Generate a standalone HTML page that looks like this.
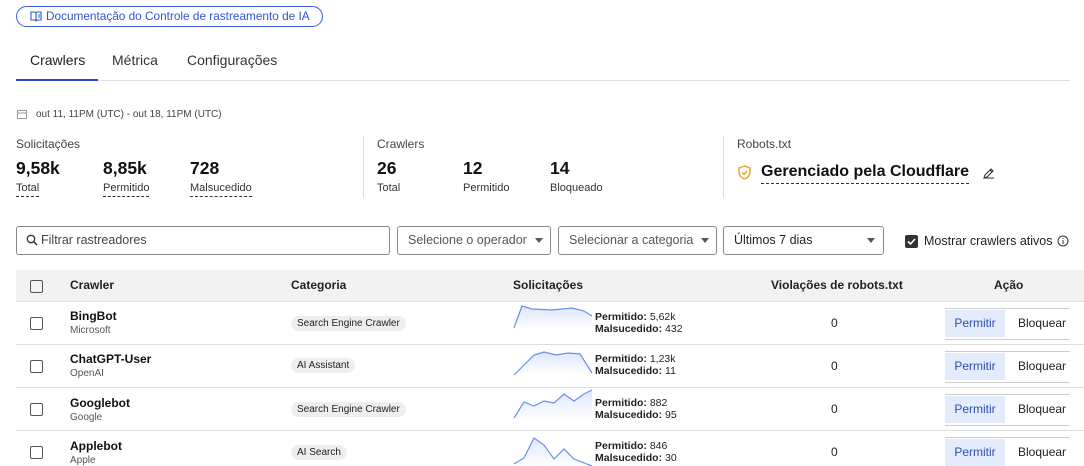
<!DOCTYPE html>
<html><head><meta charset="utf-8"><style>
*{box-sizing:border-box;margin:0;padding:0}
body{width:1084px;height:466px;overflow:hidden;background:#fff;font-family:"Liberation Sans",sans-serif;color:#222;position:relative}
.a{position:absolute;white-space:nowrap}
.doc{left:16px;top:6px;width:307px;height:21px;border:1px solid #3b5fe0;border-radius:11px;color:#2f55d4;font-size:11.8px;line-height:19px;padding-left:29px}
.tab{font-size:14px;top:52px;color:#333}
.lbl{font-size:11px;color:#333;border-bottom:1px dashed #333;padding-bottom:2px}
.big{font-size:17.5px;font-weight:bold;color:#111}
.sec{font-size:12px;color:#444}
.inp{height:29px;border:1px solid #888;border-radius:3px;top:226px;font-size:12.5px;color:#555;line-height:27px;padding-left:10px}
.cb{width:13px;height:13px;border:1px solid #555;border-radius:2px;left:30px}
.row{left:16px;width:1068px;height:43px;border-bottom:1px solid #ddd}
.name{font-size:12px;font-weight:bold;color:#111;left:70px}
.sub{font-size:10px;color:#555;left:70px}
.tag{font-size:10px;background:#eee;border-radius:8px;padding:2px 6px;left:291px}
.st{font-size:10.5px;left:595px;line-height:12px}
.zero{left:831px;font-size:12px}
.btn{left:945px;width:60px;background:#e3ecfd;color:#2b4fb0;font-size:12px;text-align:center}
.blk{left:1018px;font-size:12px;color:#222}
.hl{left:945px;width:125px;height:1px;background:#ccc}
</style></head><body>
<div class="a doc">Documentação do Controle de rastreamento de IA</div>
<svg class="a" style="left:30px;top:11px" width="12" height="11" viewBox="0 0 12 11"><path d="M1 1h4l1 1 1-1h4v8H7l-1 1-1-1H1z M6 2v8 M8 4h2 M8 6h2" fill="none" stroke="#2f55d4" stroke-width="1.1"/></svg>
<div class="a tab" style="left:30px;color:#222">Crawlers</div>
<div class="a tab" style="left:112px">Métrica</div>
<div class="a tab" style="left:187px">Configurações</div>
<div class="a" style="left:16px;top:79px;width:82px;height:2px;background:#2c48c4"></div>
<div class="a" style="left:98px;top:80px;width:972px;height:1px;background:#ddd"></div>
<svg class="a" style="left:17px;top:109px" width="10" height="10"><rect x="0.5" y="1.5" width="9" height="8" fill="none" stroke="#999"/><path d="M0 4h10" stroke="#999"/></svg>
<div class="a" style="left:36px;top:109px;font-size:10px;color:#444">out 11, 11PM (UTC) - out 18, 11PM (UTC)</div>

<div class="a sec" style="left:16px;top:137px">Solicitações</div>
<div class="a big" style="left:16px;top:158px">9,58k</div><div class="a lbl" style="left:16px;top:182px">Total</div>
<div class="a big" style="left:103px;top:158px">8,85k</div><div class="a lbl" style="left:103px;top:182px">Permitido</div>
<div class="a big" style="left:190px;top:158px">728</div><div class="a lbl" style="left:190px;top:182px">Malsucedido</div>
<div class="a" style="left:363px;top:136px;width:1px;height:62px;background:#ddd"></div>
<div class="a sec" style="left:377px;top:137px">Crawlers</div>
<div class="a big" style="left:377px;top:158px">26</div><div class="a" style="left:377px;top:182px;font-size:11px;color:#333">Total</div>
<div class="a big" style="left:463px;top:158px">12</div><div class="a" style="left:463px;top:182px;font-size:11px;color:#333">Permitido</div>
<div class="a big" style="left:550px;top:158px">14</div><div class="a" style="left:550px;top:182px;font-size:11px;color:#333">Bloqueado</div>
<div class="a" style="left:723px;top:136px;width:1px;height:62px;background:#ddd"></div>
<div class="a sec" style="left:737px;top:137px">Robots.txt</div>
<svg class="a" style="left:738px;top:165px" width="13" height="15" viewBox="0 0 13 15"><path d="M6.5 1L1 3v4c0 3.5 2.5 6 5.5 7 3-1 5.5-3.5 5.5-7V3z M4 7.5l2 2 3-3.5" fill="none" stroke="#f0a020" stroke-width="1.4"/></svg>
<div class="a" style="left:761px;top:163px;font-size:16px;font-weight:bold;color:#111;border-bottom:1px dashed #333;padding-bottom:2px">Gerenciado pela Cloudflare</div>
<svg class="a" style="left:983px;top:167px" width="12" height="12" viewBox="0 0 12 12"><path d="M1 11l1-3 6-6 2 2-6 6z M7 3l2 2 M1 11h10" fill="none" stroke="#333" stroke-width="1.1"/></svg>

<div class="a inp" style="left:16px;width:374px;padding-left:24px;color:#444">Filtrar rastreadores</div>
<svg class="a" style="left:26px;top:234px" width="12" height="12"><circle cx="5" cy="5" r="3.7" fill="none" stroke="#333" stroke-width="1.3"/><path d="M8 8l3 3" stroke="#333" stroke-width="1.5"/></svg>
<div class="a inp" style="left:397px;width:154px">Selecione o operador</div>
<div class="a inp" style="left:558px;width:159px">Selecionar a categoria</div>
<div class="a inp" style="left:723px;width:161px;color:#222">Últimos 7 dias</div>
<svg class="a" style="left:535px;top:238px" width="8" height="5"><path d="M0 0h8L4 5z" fill="#555"/></svg>
<svg class="a" style="left:701px;top:238px" width="8" height="5"><path d="M0 0h8L4 5z" fill="#555"/></svg>
<svg class="a" style="left:867px;top:238px" width="8" height="5"><path d="M0 0h8L4 5z" fill="#555"/></svg>
<div class="a" style="left:905px;top:235px;width:13px;height:13px;background:#333;border-radius:2px"></div>
<svg class="a" style="left:905px;top:235px" width="13" height="13"><path d="M3 6.5l2.5 2.5 4.5-5" fill="none" stroke="#fff" stroke-width="1.6"/></svg>
<div class="a" style="left:924px;top:234px;font-size:12.5px">Mostrar crawlers ativos</div>
<svg class="a" style="left:1057px;top:235px" width="12" height="12"><circle cx="6" cy="6" r="5" fill="none" stroke="#333"/><path d="M6 5v4M6 3v1" stroke="#333"/></svg>

<div class="a" style="left:16px;top:270px;width:1068px;height:32px;background:#f2f2f2;border-bottom:1px solid #ddd"></div>
<div class="a cb" style="top:280px"></div>
<div class="a" style="top:278px;left:70px;font-size:12px;font-weight:bold">Crawler</div>
<div class="a" style="top:278px;left:291px;font-size:12px;font-weight:bold">Categoria</div>
<div class="a" style="top:278px;left:513px;font-size:12px;font-weight:bold">Solicitações</div>
<div class="a" style="top:278px;left:771px;font-size:12px;font-weight:bold">Violações de robots.txt</div>
<div class="a" style="top:278px;left:994px;font-size:12px;font-weight:bold">Ação</div>

<div class="a row" style="top:302px"></div>
<div class="a row" style="top:345px"></div>
<div class="a row" style="top:388px"></div>

<div class="a cb" style="top:317px"></div><div class="a cb" style="top:360px"></div><div class="a cb" style="top:403px"></div><div class="a cb" style="top:446px"></div>
<div class="a name" style="top:309px">BingBot</div><div class="a sub" style="top:325px">Microsoft</div>
<div class="a name" style="top:352px">ChatGPT-User</div><div class="a sub" style="top:368px">OpenAI</div>
<div class="a name" style="top:396px">Googlebot</div><div class="a sub" style="top:412px">Google</div>
<div class="a name" style="top:439px">Applebot</div><div class="a sub" style="top:455px">Apple</div>
<div class="a tag" style="top:316px">Search Engine Crawler</div>
<div class="a tag" style="top:358px">AI Assistant</div>
<div class="a tag" style="top:402px">Search Engine Crawler</div>
<div class="a tag" style="top:445px">AI Search</div>

<svg class="a" style="left:512px;top:302px" width="82" height="164" viewBox="0 0 82 164">
<defs><linearGradient id="g" x1="0" y1="0" x2="0" y2="1"><stop offset="0" stop-color="#c9d6fb"/><stop offset="1" stop-color="#fff"/></linearGradient></defs>
<path d="M2 26L10 4 20 7 40 8 60 6 72 9 80 14V28H2z" fill="url(#g)" opacity=".6"/><path d="M2 26L10 4 20 7 40 8 60 6 72 9 80 14" fill="none" stroke="#6a8ef0" stroke-width="1.2"/>
<path d="M2 73L22 53 32 50 44 53 56 51 68 52 80 71H2z" fill="url(#g)" opacity=".6"/><path d="M2 73L22 53 32 50 44 53 56 51 68 52 80 71" fill="none" stroke="#6a8ef0" stroke-width="1.2"/>
<path d="M2 116L12 100 22 104 32 99 42 101 52 92 62 99 72 92 80 88V118H2z" fill="url(#g)" opacity=".6"/><path d="M2 116L12 100 22 104 32 99 42 101 52 92 62 99 72 92 80 88" fill="none" stroke="#6a8ef0" stroke-width="1.2"/>
<path d="M2 162L12 156 22 136 32 143 42 157 52 147 62 157 80 164H2z" fill="url(#g)" opacity=".6"/><path d="M2 162L12 156 22 136 32 143 42 157 52 147 62 157 80 164" fill="none" stroke="#6a8ef0" stroke-width="1.2"/>
</svg>
<div class="a st" style="top:311px"><b>Permitido:</b> 5,62k<br><b>Malsucedido:</b> 432</div>
<div class="a st" style="top:353px"><b>Permitido:</b> 1,23k<br><b>Malsucedido:</b> 11</div>
<div class="a st" style="top:397px"><b>Permitido:</b> 882<br><b>Malsucedido:</b> 95</div>
<div class="a st" style="top:440px"><b>Permitido:</b> 846<br><b>Malsucedido:</b> 30</div>
<div class="a zero" style="top:316px">0</div><div class="a zero" style="top:359px">0</div><div class="a zero" style="top:402px">0</div><div class="a zero" style="top:445px">0</div>

<div class="a hl" style="top:308px"></div><div class="a hl" style="top:339px"></div>
<div class="a hl" style="top:351px"></div><div class="a hl" style="top:382px"></div>
<div class="a hl" style="top:394px"></div><div class="a hl" style="top:425px"></div>
<div class="a hl" style="top:437px"></div>
<div class="a btn" style="top:310px;height:27px;line-height:27px">Permitir</div>
<div class="a btn" style="top:353px;height:27px;line-height:27px">Permitir</div>
<div class="a btn" style="top:396px;height:27px;line-height:27px">Permitir</div>
<div class="a btn" style="top:439px;height:27px;line-height:27px">Permitir</div>
<div class="a blk" style="top:316px">Bloquear</div><div class="a blk" style="top:359px">Bloquear</div><div class="a blk" style="top:402px">Bloquear</div><div class="a blk" style="top:445px">Bloquear</div>
</body></html>
